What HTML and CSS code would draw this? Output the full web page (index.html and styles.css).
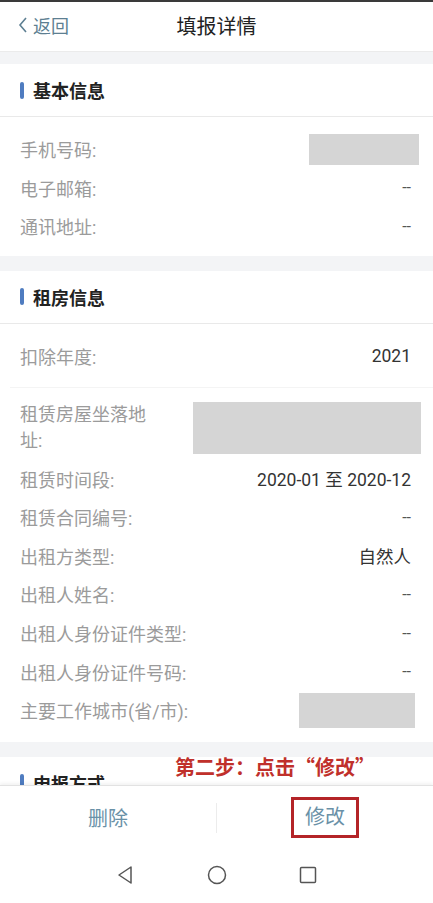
FILE: index.html
```html
<!DOCTYPE html>
<html lang="zh-CN">

<head>
  <meta charset="UTF-8">
  <meta name="viewport" content="width=device-width, initial-scale=1.0">
  <title>填报详情</title>
  <link rel="stylesheet" href="styles.css">
</head>

<body>
  <div class="page">
    <!-- 顶部导航 -->
    <div class="nav-head">
      <a class="back">
        <svg width="10" height="18" viewBox="0 0 10 18">
          <path d="M8 2 L2 9 L8 16" fill="none" stroke="#5d7f92" stroke-width="1.6" />
        </svg>
        返回
      </a>
      <div class="title">填报详情</div>
    </div>

    <div class="content">
      <div class="gap"></div>

      <!-- 基本信息 -->
      <div class="sec">
        <div class="sec-title"><i></i>基本信息</div>
        <div class="list list-first">
          <div class="row"><span class="label">手机号码:</span><span class="mask mask-phone"></span></div>
          <div class="row"><span class="label">电子邮箱:</span><span class="value dash">--</span></div>
          <div class="row"><span class="label">通讯地址:</span><span class="value dash">--</span></div>
        </div>
      </div>

      <div class="gap gap-lg"></div>

      <!-- 租房信息 -->
      <div class="sec">
        <div class="sec-title"><i></i>租房信息</div>
        <div class="list list-year">
          <div class="row"><span class="label">扣除年度:</span><span class="value">2021</span></div>
        </div>
        <div class="list list-main">
          <div class="row row-addr">
            <span class="label label-wrap">租赁房屋坐落地址:</span>
            <span class="mask mask-addr"></span>
          </div>
          <div class="row"><span class="label">租赁时间段:</span><span class="value">2020-01 至 2020-12</span></div>
          <div class="row"><span class="label">租赁合同编号:</span><span class="value dash">--</span></div>
          <div class="row"><span class="label">出租方类型:</span><span class="value">自然人</span></div>
          <div class="row"><span class="label">出租人姓名:</span><span class="value dash">--</span></div>
          <div class="row"><span class="label">出租人身份证件类型:</span><span class="value dash">--</span></div>
          <div class="row"><span class="label">出租人身份证件号码:</span><span class="value dash">--</span></div>
          <div class="row"><span class="label">主要工作城市(省/市):</span><span class="mask mask-city"></span></div>
        </div>
      </div>

      <div class="gap gap-lg"></div>

      <!-- 申报方式 -->
      <div class="sec">
        <div class="sec-title"><i></i>申报方式</div>
      </div>
    </div>

    <!-- 提示文字 -->
    <div class="tip">第二步：点击“修改”</div>

    <!-- 底部按钮 -->
    <div class="foot">
      <div class="btn">删除</div>
      <div class="split"></div>
      <div class="btn"><span class="hl">修改</span></div>
    </div>

    <!-- 系统导航栏 -->
    <div class="sys-bar">
      <svg width="20" height="20" viewBox="0 0 20 20">
        <path d="M15 2 L3 10 L15 18 Z" fill="none" stroke="#555" stroke-width="1.5" stroke-linejoin="round" />
      </svg>
      <svg width="20" height="20" viewBox="0 0 20 20">
        <circle cx="10" cy="10" r="8.5" fill="none" stroke="#555" stroke-width="1.5" />
      </svg>
      <svg width="20" height="20" viewBox="0 0 20 20">
        <rect x="2.5" y="2.5" width="15" height="15" rx="1" fill="none" stroke="#555" stroke-width="1.5" />
      </svg>
    </div>
  </div>
</body>

</html>
```

FILE: styles.css
```css
body,
html {
  margin: 0;
  width: 100%;
  height: 100%;
  overflow: hidden;
}

body {
  font-family: Roboto, "Noto Sans CJK SC", sans-serif;
  background: #fff;
  color: #333;
}

.page {
  position: relative;
  display: flex;
  flex-direction: column;
  height: 903px;
  border-top: 2px solid #3a3a3a;
  box-sizing: border-box;
}

.nav-head {
  position: relative;
  height: 49px;
  display: flex;
  align-items: center;
  justify-content: center;
  background: #fff;
}

.back {
  position: absolute;
  left: 18px;
  top: 10px;
  display: flex;
  align-items: center;
  gap: 5px;
  font-size: 18px;
  color: #5d7f92;
}

.title {
  font-size: 20px;
  color: #222;
  margin-top: -3px;
}

.content {
  flex: 1;
  overflow: hidden;
}

.gap {
  height: 12px;
  background: #f3f4f6;
  border-top: 1px solid #ebebeb;
}

.gap-lg {
  height: 15px;
  border-top: 0;
}

.sec-title {
  height: 52px;
  display: flex;
  align-items: center;
  padding-left: 20px;
  font-size: 18px;
  font-weight: bold;
  color: #222;
  border-bottom: 1px solid #e9e9e9;
}

.sec-title i {
  width: 4px;
  height: 17px;
  border-radius: 2px;
  background: #4f7cc0;
  margin-right: 9px;
}

.list {
  padding: 0 20px;
}

.list-first {
  padding-top: 13px;
  padding-bottom: 10px;
}

.list-year {
  padding-top: 13px;
  padding-bottom: 12px;
  border-bottom: 1px solid #f4f4f4;
  margin-left: 10px;
  padding-left: 10px;
}

.list-main {
  padding-top: 9px;
  padding-bottom: 12px;
}

.row {
  height: 38.6px;
  display: flex;
  align-items: center;
  justify-content: space-between;
  font-size: 18px;
}

.row-addr {
  height: 62px;
}

.label {
  color: #9b9b9b;
}

.label-wrap {
  width: 130px;
  line-height: 26px;
}

.value {
  color: #333;
  font-size: 17.5px;
  padding-right: 2px;
}

.dash {
  color: #555;
  font-size: 16px;
}

.mask {
  display: block;
  background: #d5d5d5;
}

.mask-phone {
  width: 110px;
  height: 31px;
  margin-right: -6px;
}

.mask-addr {
  width: 228px;
  height: 52px;
  margin-right: -8px;
}

.mask-city {
  width: 116px;
  height: 35px;
  margin-right: -2px;
}

.tip {
  position: absolute;
  left: 175px;
  top: 750px;
  font-family: "Noto Sans CJK SC", sans-serif;
  font-size: 20px;
  font-weight: bold;
  color: #c0302b;
}

.foot {
  height: 63px;
  display: flex;
  align-items: center;
  background: #fff;
  border-top: 1px solid #e2e2e2;
  box-shadow: 0 -2px 3px rgba(0, 0, 0, 0.05);
}

.btn {
  flex: 1;
  text-align: center;
  font-size: 20px;
  color: #6a91a7;
}

.split {
  width: 1px;
  height: 30px;
  background: #ececec;
}

.hl {
  display: inline-block;
  padding: 3px 11px;
  border: 3px solid #b42428;
  line-height: 29px;
}

.sys-bar {
  height: 52px;
  display: flex;
  align-items: center;
  justify-content: center;
  gap: 71px;
  background: #fff;
  padding-bottom: 2px;
}
```
